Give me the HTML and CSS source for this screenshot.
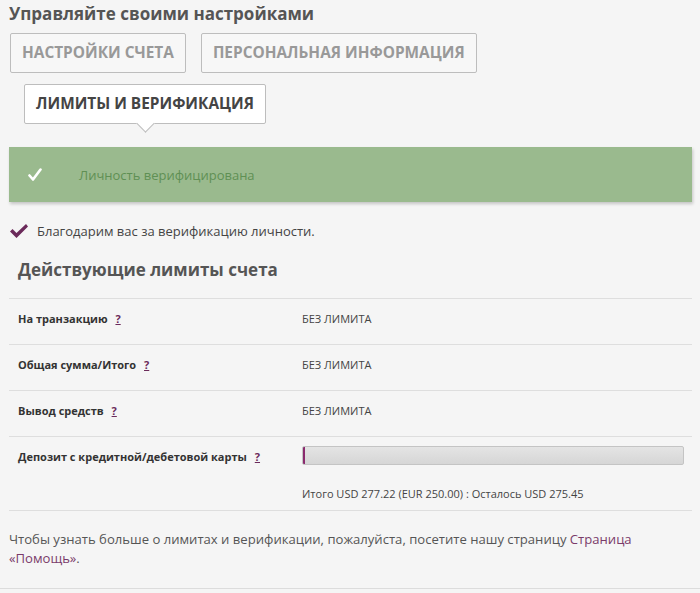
FILE: index.html
```html
<!DOCTYPE html>
<html lang="ru">
<head>
    <meta charset="UTF-8">
    <title>Лимиты и верификация</title>
    <link rel="stylesheet" href="styles.css">
</head>
<body>

<div class="page">
    <h1 class="page-title">Управляйте своими настройками</h1>

    <div class="tabs">
        <a class="tab">Настройки счета</a>
        <a class="tab">Персональная информация</a>
        <a class="tab tab-active">Лимиты и верификация</a>
    </div>

    <div class="verified-banner">
        <svg class="banner-check" width="14" height="14" viewBox="0 0 14 14">
            <path d="M1.5 7.5 L5 11.5 L12.5 1.5" fill="none" stroke="#fff" stroke-width="2.6" stroke-linecap="round" stroke-linejoin="round"/>
        </svg>
        <span>Личность верифицирована</span>
    </div>

    <p class="thanks">
        <svg class="thanks-check" width="20" height="16" viewBox="0 0 20 16">
            <path d="M1 8.5 L3.5 6 L7.5 10 L17 1 L19 3.5 L7.5 15 Z" fill="#6b2a5a"/>
        </svg>
        Благодарим вас за верификацию личности.
    </p>

    <h2 class="section-title">Действующие лимиты счета</h2>

    <div class="limits">
        <div class="limit-row">
            <div class="limit-label">На транзакцию <a class="help">?</a></div>
            <div class="limit-value">БЕЗ ЛИМИТА</div>
        </div>
        <div class="limit-row">
            <div class="limit-label">Общая сумма/Итого <a class="help">?</a></div>
            <div class="limit-value">БЕЗ ЛИМИТА</div>
        </div>
        <div class="limit-row">
            <div class="limit-label">Вывод средств <a class="help">?</a></div>
            <div class="limit-value">БЕЗ ЛИМИТА</div>
        </div>
        <div class="limit-row limit-row-card">
            <div class="limit-label">Депозит с кредитной/дебетовой карты <a class="help">?</a></div>
            <div class="limit-value">
                <div class="progress"><div class="progress-fill" style="width: 0.6%"></div></div>
                <div class="progress-note">Итого USD 277.22 (EUR 250.00) : Осталось USD 275.45</div>
            </div>
        </div>
    </div>

    <p class="more-info">Чтобы узнать больше о лимитах и верификации, пожалуйста, посетите нашу страницу <a class="link">Страница «Помощь»</a>.</p>
</div>

</body>
</html>
```

FILE: styles.css
```css
body {
    margin: 0;
    background: #f5f5f5;
    font-family: "Open Sans", Arial, sans-serif;
    color: #444;
}
.page {
    padding: 3px 8px 0 9px;
    height: 585px;
    border-bottom: 1px solid #dcdcdc;
    box-shadow: 0 2px 3px rgba(0, 0, 0, 0.12);
}
.page-title {
    margin: 0;
    font-size: 17px;
    font-weight: bold;
    color: #555;
    line-height: 22px;
}
.tabs {
    display: flex;
    flex-wrap: wrap;
    gap: 11px 15px;
    margin: 8px 0 0 1px;
}
.tab {
    display: block;
    height: 38px;
    line-height: 38px;
    padding: 0 11px;
    border: 1px solid #bdbdbd;
    border-radius: 2px;
    background: #f7f7f7;
    color: #999;
    font-size: 15.4px;
    font-weight: bold;
    text-transform: uppercase;
}
.tab-active {
    position: relative;
    margin-left: 14px;
    background: #fff;
    color: #444;
}
.tab-active::after {
    content: "";
    position: absolute;
    left: 114px;
    bottom: -7px;
    width: 12px;
    height: 12px;
    background: #fff;
    border-right: 1px solid #bdbdbd;
    border-bottom: 1px solid #bdbdbd;
    transform: rotate(45deg);
}
.verified-banner {
    display: flex;
    align-items: center;
    height: 55px;
    margin-top: 23px;
    padding-left: 19px;
    background: #9aba8e;
    box-shadow: 1px 2px 3px rgba(0, 0, 0, 0.2);
    color: #5f9054;
    font-size: 13px;
}
.banner-check {
    margin-right: 37px;
}
.thanks {
    display: flex;
    align-items: center;
    margin: 20px 0 0 0;
    font-size: 13px;
    color: #444;
}
.thanks-check {
    margin-right: 8px;
}
.section-title {
    margin: 18px 0 0 9px;
    font-size: 17px;
    font-weight: bold;
    color: #555;
    line-height: 24px;
}
.limits {
    margin-top: 16px;
}
.limit-row {
    display: flex;
    height: 45px;
    border-top: 1px solid #dedede;
    font-size: 11px;
}
.limit-row-card {
    height: 73px;
    border-bottom: 1px solid #dedede;
}
.limit-label {
    width: 284px;
    padding: 12px 0 0 9px;
    font-weight: bold;
    color: #333;
}
.limit-value {
    flex: 1;
    padding: 12px 8px 0 0;
    color: #444;
}
.help {
    margin-left: 5px;
    color: #6b2a5a;
    text-decoration: underline;
}
.limit-row-card .limit-value {
    padding-top: 9px;
}
.progress {
    height: 17px;
    border: 1px solid #c4c4c4;
    border-radius: 2px;
    background: linear-gradient(#e4e4e4, #d6d6d6);
    overflow: hidden;
}
.progress-fill {
    height: 100%;
    background: #8a2a6e;
    min-width: 2px;
}
.progress-note {
    margin-top: 21px;
}
.more-info {
    margin: 19px 0 0 0;
    font-size: 13.1px;
    line-height: 19px;
    color: #555;
}
.link {
    color: #7a3b6a;
}
```
